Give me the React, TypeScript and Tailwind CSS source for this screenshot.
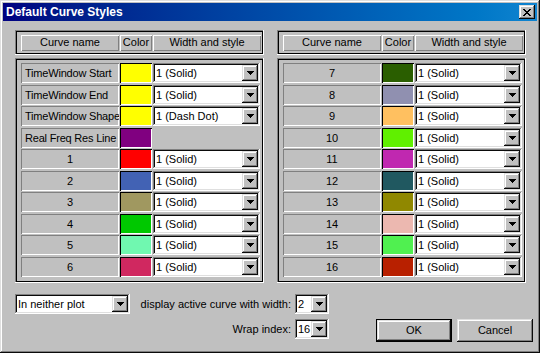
const RAISED =
  'bg-[#c0c0c0] shadow-[inset_-1px_-1px_#0a0a0a,inset_1px_1px_#dfdfdf,inset_-2px_-2px_#808080,inset_2px_2px_#fff]'
const FIELD =
  'bg-white shadow-[inset_-1px_-1px_#fff,inset_1px_1px_#808080,inset_-2px_-2px_#dfdfdf,inset_2px_2px_#0a0a0a]'
const FRAME = 'shadow-[inset_-1px_-1px_#fff,inset_1px_1px_#808080,inset_0_0_0_2px_#000]'

type Row = { name: string; swatch: string; style?: string; left?: boolean }

const LEFT_ROWS: Row[] = [
  { name: 'TimeWindow Start', swatch: 'bg-[#ffff00]', style: '1 (Solid)', left: true },
  { name: 'TimeWindow End', swatch: 'bg-[#ffff00]', style: '1 (Solid)', left: true },
  { name: 'TimeWindow Shape', swatch: 'bg-[#ffff00]', style: '1 (Dash Dot)', left: true },
  { name: 'Real Freq Res Line', swatch: 'bg-[#800080]', left: true },
  { name: '1', swatch: 'bg-[#ff0000]', style: '1 (Solid)' },
  { name: '2', swatch: 'bg-[#4262b4]', style: '1 (Solid)' },
  { name: '3', swatch: 'bg-[#a09860]', style: '1 (Solid)' },
  { name: '4', swatch: 'bg-[#00c800]', style: '1 (Solid)' },
  { name: '5', swatch: 'bg-[#70f8b0]', style: '1 (Solid)' },
  { name: '6', swatch: 'bg-[#d02860]', style: '1 (Solid)' },
]

const RIGHT_ROWS: Row[] = [
  { name: '7', swatch: 'bg-[#2a5e00]', style: '1 (Solid)' },
  { name: '8', swatch: 'bg-[#9090b0]', style: '1 (Solid)' },
  { name: '9', swatch: 'bg-[#ffc060]', style: '1 (Solid)' },
  { name: '10', swatch: 'bg-[#60f000]', style: '1 (Solid)' },
  { name: '11', swatch: 'bg-[#c028b0]', style: '1 (Solid)' },
  { name: '12', swatch: 'bg-[#205860]', style: '1 (Solid)' },
  { name: '13', swatch: 'bg-[#908800]', style: '1 (Solid)' },
  { name: '14', swatch: 'bg-[#ecb8b0]', style: '1 (Solid)' },
  { name: '15', swatch: 'bg-[#50f050]', style: '1 (Solid)' },
  { name: '16', swatch: 'bg-[#b82000]', style: '1 (Solid)' },
]

function Arrow() {
  return (
    <svg width="7" height="4" viewBox="0 0 7 4" shapeRendering="crispEdges">
      <path d="M0 0h7v1H0z M1 1h5v1H1z M2 2h3v1H2z M3 3h1v1H3z" fill="#000" />
    </svg>
  )
}

function Combo({ value, className }: { value: string; className: string }) {
  return (
    <div className={`${FIELD} ${className} h-[20px] flex items-center p-[2px]`}>
      <span className="flex-1 pl-[1px] whitespace-nowrap overflow-hidden">{value}</span>
      <div className={`${RAISED} w-[16px] h-[16px] flex items-center justify-center`}>
        <Arrow />
      </div>
    </div>
  )
}

function Panel({ rows }: { rows: Row[] }) {
  return (
    <div className="w-[249px]">
      <div className={`${FRAME} h-[25px] flex items-center gap-[1px] pl-[6px]`}>
        <div className="w-[98px] h-[16px] flex items-center justify-center shadow-[inset_1px_1px_#fff,inset_-1px_-1px_#808080]">
          Curve name
        </div>
        <div className="w-[32px] h-[16px] flex items-center justify-center shadow-[inset_1px_1px_#fff,inset_-1px_-1px_#808080]">
          Color
        </div>
        <div className="w-[108px] h-[16px] flex items-center justify-center shadow-[inset_1px_1px_#fff,inset_-1px_-1px_#808080]">
          Width and style
        </div>
      </div>
      <div className={`${FRAME} mt-[3px] h-[225px] pt-[5px] pl-[6px] flex flex-col`}>
        {rows.map((r, i) => (
          <div
            key={r.name}
            className={`flex gap-[1px] h-[20px] ${i === 0 ? '' : i % 2 === 1 ? 'mt-[2px]' : 'mt-[1px]'}`}
          >
            <div
              className={`w-[98px] h-[20px] flex items-center whitespace-nowrap overflow-hidden shadow-[inset_1px_1px_#808080,inset_-1px_-1px_#fff] ${
                r.left ? 'pl-[4px] tracking-[-0.2px]' : 'justify-center'
              }`}
            >
              {r.name}
            </div>
            <div className={`w-[32px] h-[20px] ${r.swatch} shadow-[inset_1px_1px_#000,inset_-1px_-1px_#fff]`} />
            {r.style && <Combo value={r.style} className="w-[107px]" />}
          </div>
        ))}
      </div>
    </div>
  )
}

export default function App() {
  return (
    <div className="w-[540px] h-[353px] p-[3px] bg-[#c0c0c0] text-black text-[11px] font-['Liberation_Sans',Arial,sans-serif] shadow-[inset_-1px_-1px_#0a0a0a,inset_1px_1px_#dfdfdf,inset_-2px_-2px_#808080,inset_2px_2px_#fff] overflow-hidden">
      <div className="h-[18px] flex items-center bg-linear-to-r from-[#000080] to-[#1084d0] pl-[3px] pr-[2px]">
        <span className="flex-1 text-white font-bold text-[12px]">Default Curve Styles</span>
        <div className={`${RAISED} w-[16px] h-[14px] flex items-center justify-center`}>
          <svg width="8" height="7" viewBox="0 0 8 7" shapeRendering="crispEdges">
            <path
              d="M0 0h2v1H0z M6 0h2v1H6z M1 1h2v1H1z M5 1h2v1H5z M2 2h4v1H2z M3 3h2v1H3z M2 4h4v1H2z M1 5h2v1H1z M5 5h2v1H5z M0 6h2v1H0z M6 6h2v1H6z"
              fill="#000"
            />
          </svg>
        </div>
      </div>

      <div className="flex gap-[13px] pl-[12px] mt-[9px]">
        <Panel rows={LEFT_ROWS} />
        <Panel rows={RIGHT_ROWS} />
      </div>

      <div className="flex items-start pl-[12px] mt-[11px]">
        <Combo value="In neither plot" className="w-[115px]" />
        <div className="ml-[8px] grid grid-cols-[153px_34px] gap-x-[4px] gap-y-[5px]">
          <div className="h-[20px] flex items-center justify-end whitespace-nowrap">display active curve with width:</div>
          <Combo value="2" className="w-[34px]" />
          <div className="h-[20px] flex items-center justify-end">Wrap index:</div>
          <Combo value="16" className="w-[34px]" />
        </div>
        <div className="ml-[47px] mt-[25px] flex gap-[5px]">
          <div className="w-[76px] h-[23px] border border-black">
            <div className={`${RAISED} w-full h-full flex items-center justify-center`}>OK</div>
          </div>
          <div className={`${RAISED} w-[76px] h-[23px] flex items-center justify-center`}>Cancel</div>
        </div>
      </div>
    </div>
  )
}
